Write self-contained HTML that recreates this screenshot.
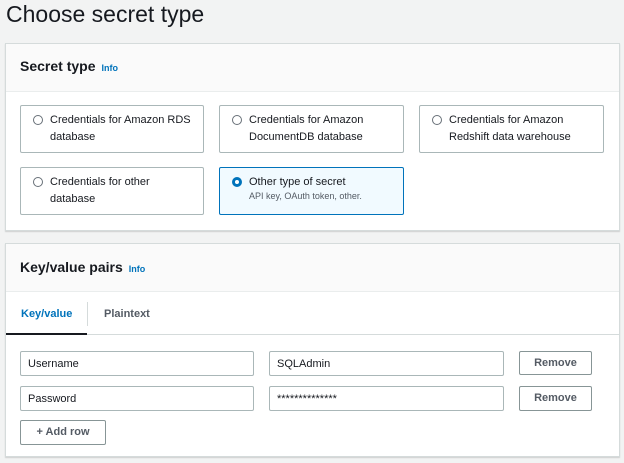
<!DOCTYPE html><html><head><style>
body{margin:0;width:624px;height:463px;background:#f2f3f3;font-family:"Liberation Sans",sans-serif;position:relative;overflow:hidden;color:#16191f}
.a{position:absolute;box-sizing:border-box}
.panel{background:#fff;border:1px solid #d5dbdb;box-shadow:0 1px 1px rgba(0,0,0,.15)}
.hdr{background:#fafafa;border-bottom:1px solid #eaeded}
.card{border:1px solid #aab7b8;border-radius:2px;background:#fff;font-size:11px;line-height:17px;padding:6px 0 0 29px}
.card .r{position:absolute;left:12px;top:9px;width:10px;height:10px;border:1px solid #687078;border-radius:50%;box-sizing:border-box}
.sel{border-color:#0073bb;background:#f1faff}
.sel .r{border:3px solid #0073bb;background:#fff}
.h{font-size:14px;font-weight:bold}
.info{font-size:9px;font-weight:bold;color:#0073bb;margin-left:6px}
.in{border:1px solid #aab7b8;border-radius:2px;font-size:11px;padding:0 7px;line-height:25px;background:#fff}
.btn{border:1px solid #879596;border-radius:2px;font-size:11px;font-weight:bold;color:#545b64;text-align:center;line-height:23px;background:#fff}
</style></head><body>
<div class="a" style="left:6px;top:0;font-size:23px;line-height:29px">Choose secret type</div>
<div class="a panel" style="left:5px;top:43px;width:615px;height:188px"></div>
<div class="a hdr" style="left:6px;top:44px;width:613px;height:48px"></div>
<div class="a h" style="left:20px;top:58px">Secret type<span class="info">Info</span></div>
<div class="a card" style="left:20px;top:105px;width:184px;height:48px"><span class="r"></span>Credentials for Amazon RDS<br>database</div>
<div class="a card" style="left:219px;top:105px;width:185px;height:48px"><span class="r"></span>Credentials for Amazon<br>DocumentDB database</div>
<div class="a card" style="left:419px;top:105px;width:185px;height:48px"><span class="r"></span>Credentials for Amazon<br>Redshift data warehouse</div>
<div class="a card" style="left:20px;top:167px;width:184px;height:48px"><span class="r"></span>Credentials for other<br>database</div>
<div class="a card sel" style="left:219px;top:167px;width:185px;height:48px"><span class="r"></span>Other type of secret<br><span style="font-size:9px;color:#545b64;line-height:11px;display:block">API key, OAuth token, other.</span></div>

<div class="a panel" style="left:5px;top:243px;width:615px;height:214px"></div>
<div class="a hdr" style="left:6px;top:244px;width:613px;height:48px"></div>
<div class="a h" style="left:20px;top:259px">Key/value pairs<span class="info">Info</span></div>
<div class="a" style="left:6px;top:334px;width:613px;height:1px;background:#d5dbdb"></div>
<div class="a" style="left:6px;top:333px;width:81px;height:2px;background:#16191f"></div>
<div class="a" style="left:87px;top:302px;width:1px;height:24px;background:#d5dbdb"></div>
<div class="a" style="left:21px;top:308px;font-size:11px;font-weight:bold;color:#0073bb">Key/value</div>
<div class="a" style="left:104px;top:308px;font-size:11px;font-weight:bold;color:#545b64">Plaintext</div>
<div class="a in" style="left:20px;top:351px;width:234px;height:25px">Username</div>
<div class="a in" style="left:269px;top:351px;width:235px;height:25px">SQLAdmin</div>
<div class="a btn" style="left:519px;top:351px;width:73px;height:24px">Remove</div>
<div class="a in" style="left:20px;top:386px;width:234px;height:25px">Password</div>
<div class="a in" style="left:269px;top:386px;width:235px;height:25px">**************</div>
<div class="a btn" style="left:519px;top:386px;width:73px;height:25px">Remove</div>
<div class="a btn" style="left:20px;top:420px;width:86px;height:25px">+ Add row</div>
</body></html>
